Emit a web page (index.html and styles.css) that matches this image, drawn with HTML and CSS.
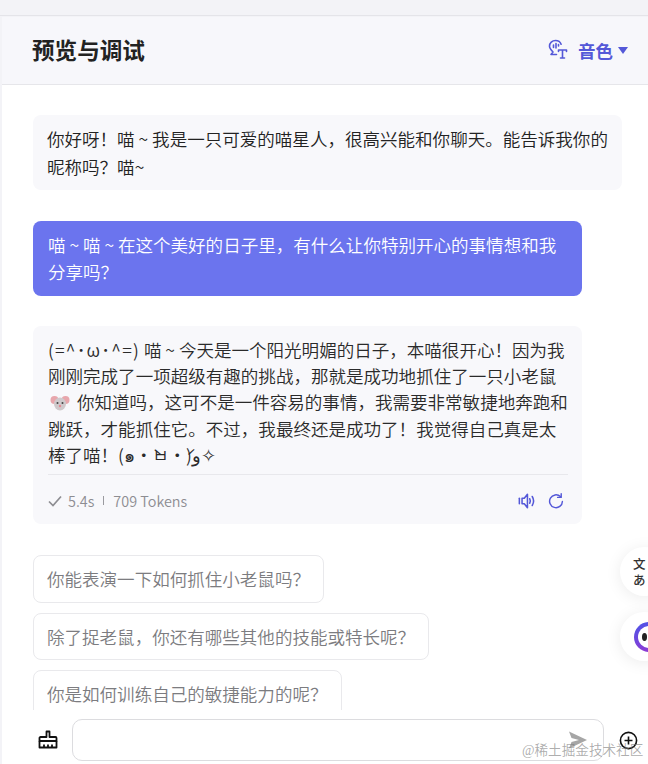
FILE: index.html
```html
<!DOCTYPE html>
<html lang="zh">
<head>
<meta charset="utf-8">
<title>预览与调试</title>
<link rel="stylesheet" href="styles.css">
</head>
<body>
<div class="page">
  <div class="topstrip"></div>
  <main class="panel">
    <header class="head">
      <h1 class="title">预览与调试</h1>
      <div class="voice">
        <svg class="voice-icon" viewBox="0 0 20 20" fill="none" stroke="currentColor" stroke-width="1.6" stroke-linecap="round" stroke-linejoin="round"><path d="M8.500 15H3L5 12.500C3 10.500 1.500 9 1.500 6.800 1.500 3.500 4.200 1 7.500 1c2.600 0 4.800 1.500 5.600 3.800"/><path d="M5.500 5.500v2.500M8 4v4.500M10.500 5v1.500"/><path d="M10.500 10.500h8M14.500 10.500v8M12.500 18.500h4M10.500 10.500v1.500M18.500 10.500v1.500"/></svg>
        <span class="voice-label">音色</span>
        <span class="voice-caret"></span>
      </div>
    </header>
    <section class="messages">
      <div class="bubble bubble-bot bubble-wide">你好呀！喵 ~ 我是一只可爱的喵星人，很高兴能和你聊天。能告诉我你的昵称吗？喵~</div>
      <div class="bubble bubble-user">喵 ~ 喵 ~ 在这个美好的日子里，有什么让你特别开心的事情想和我分享吗？</div>
      <div class="bubble bubble-bot bubble-answer">
        <div class="answer-text"><span class="kaomoji">(=^･ω･^=)</span> 喵 ~ 今天是一个阳光明媚的日子，本喵很开心！因为我刚刚完成了一项超级有趣的挑战，那就是成功地抓住了一只小老鼠 <svg class="mouse" viewBox="0 0 20 18"><circle cx="4.500" cy="6" r="4" fill="#e8a6ac"/><circle cx="15.500" cy="6" r="4" fill="#e8a6ac"/><ellipse cx="10" cy="10" rx="6" ry="6.500" fill="#cfc9cc"/><circle cx="7.500" cy="9" r="1" fill="#444"/><circle cx="12.500" cy="9" r="1" fill="#444"/><circle cx="10" cy="12" r="1.200" fill="#e58a94"/></svg> 你知道吗，这可不是一件容易的事情，我需要非常敏捷地奔跑和跳跃，才能抓住它。不过，我最终还是成功了！我觉得自己真是太棒了喵！(๑•̀ㅂ•́)و✧</div>
        <div class="answer-foot">
          <svg class="check" viewBox="0 0 14 12" fill="none" stroke="currentColor" stroke-width="1.700"><path d="M1 6.500L5 10.500L13 1.500"/></svg>
          <span>5.4s</span>
          <span class="sep"></span>
          <span>709 Tokens</span>
          <span class="foot-actions">
            <svg class="act" viewBox="0 0 20 20" fill="none" stroke="currentColor" stroke-width="1.700" stroke-linecap="round" stroke-linejoin="round"><path d="M1.500 7v6"/><path d="M4.500 7H7L10.500 2.500v15L7 13H4.500z"/><path d="M13 7.500c.9 1.600.9 3.400 0 5M15.800 5c1.900 3.100 1.900 6.900 0 10"/></svg>
            <svg class="act act-small" viewBox="0 0 20 20" fill="none" stroke="currentColor" stroke-width="1.800" stroke-linecap="round" stroke-linejoin="round"><path d="M18 10.500A8 8 0 1 1 15.500 4.500"/><path d="M16.500 1v4.500h-4.500"/></svg>
          </span>
        </div>
      </div>
      <div class="suggestions">
        <div class="chip">你能表演一下如何抓住小老鼠吗？</div>
        <div class="chip">除了捉老鼠，你还有哪些其他的技能或特长呢？</div>
        <div class="chip">你是如何训练自己的敏捷能力的呢？</div>
      </div>
    </section>
    <footer class="inputbar">
      <svg class="brush" viewBox="0 0 20 20" fill="none" stroke="#111" stroke-width="1.800" stroke-linejoin="round"><path d="M8.500 1.500h3V7H17.500a1 1 0 0 1 1 1v3h-17V8a1 1 0 0 1 1-1h6z"/><path d="M1.500 11V17.500h17V11"/><path d="M6 14.500v3M10 14.500v3M14 14.500v3"/></svg>
      <div class="inputbox">
        <svg class="send" viewBox="0 0 20 20" fill="#a6a6a6"><path d="M1 1.500L19 10 1 18.500 3.500 12 11 10 3.500 8z"/></svg>
      </div>
      <svg class="plus" viewBox="0 0 20 20" fill="none" stroke="#111" stroke-width="1.700"><circle cx="10" cy="10" r="8.500"/><path d="M10 5.800v8.400M5.800 10h8.400"/></svg>
    </footer>
  </main>
  <div class="float float-translate"><span class="translate-glyph">文<br>あ</span></div>
  <div class="float float-bot"><span class="bot-ring"><span class="bot-eye"></span></span></div>
  <div class="watermark">@稀土掘金技术社区</div>
</div>
</body>
</html>
```

FILE: styles.css
```css
* { box-sizing: border-box; }
html, body { margin: 0; padding: 0; }
body {
  width: 648px;
  height: 764px;
  overflow: hidden;
  background: #f3f3f7;
  font-family: "Noto Sans CJK SC", "Inter", sans-serif;
  font-weight: 350;
  color: #222;
}
.page { position: relative; width: 648px; height: 764px; display: flex; flex-direction: column; overflow: hidden; }
.topstrip { height: 16px; flex: none; border-bottom: 1px solid #e4e4e9; }
.panel { flex: 1; min-height: 0; margin-top: 1px; margin-left: 2px; display: flex; flex-direction: column; background: #fff; }
.head {
  flex: none;
  height: 68px;
  padding: 0 20px 0 30px;
  display: flex;
  align-items: center;
  justify-content: space-between;
  background: #f7f7fb;
  border-bottom: 1px solid #e6e6ea;
}
.title { margin: 0; font-size: 22.600px; font-weight: 700; color: #222; line-height: 1; }
.voice { display: flex; align-items: center; color: #5458d8; }
.voice-icon { width: 20px; height: 21px; margin-right: 10px; margin-top: -3px; }
.voice-label { font-size: 17.500px; font-weight: 700; line-height: 1; }
.voice-caret { width: 0; height: 0; margin-left: 5px; border-left: 5px solid transparent; border-right: 5px solid transparent; border-top: 7px solid #5458d8; }
.messages { flex: 1; min-height: 0; overflow: hidden; padding: 30px 24px 0 31px; display: flex; flex-direction: column; align-items: flex-start; }
.bubble { flex: none; border-radius: 8px; font-size: 17.550px; line-height: 27px; }
.bubble-bot { background: #f8f8fb; color: #222; }
.bubble-wide { width: 589px; height: 75px; padding: 10px 14px; margin-bottom: 31px; line-height: 28px; }
.bubble-user { width: 549px; height: 75px; padding: 10px 15px; margin-bottom: 30px; background: #6b74ee; color: #fff; }
.bubble-answer { width: 549px; height: 198px; padding: 11px 14px 0 15px; margin-bottom: 31px; }
.answer-text { height: 135px; line-height: 26.200px; color: #2a2a2a; }
.kaomoji { display: inline-block; letter-spacing: 1.200px; }
.mouse { width: 20px; height: 18px; margin: 0 3px 0 2px; vertical-align: -3px; }
.answer-foot { margin-top: 2px; height: 50px; padding-top: 2px; border-top: 1px solid #e8e8ec; display: flex; align-items: center; font-size: 14.400px; color: #8d8d92; }
.check { width: 14px; height: 12px; margin-right: 6px; color: #8d8d92; }
.sep { width: 1px; height: 9px; background: #9a9a9f; margin: 0 9px; }
.foot-actions { margin-left: auto; padding-right: 4px; display: flex; align-items: center; gap: 12px; color: #5458d8; }
.act { width: 18px; height: 18px; display: block; }
.act-small { width: 16px; height: 16px; }
.suggestions { flex: none; display: flex; flex-direction: column; align-items: flex-start; gap: 10px; }
.chip { flex: none; height: 47.500px; padding: 0 13px; display: flex; align-items: center; border: 1px solid #e9e9ec; border-radius: 8px; background: #fff; font-size: 17.550px; color: #7c7c80; white-space: nowrap; }
.inputbar { flex: none; height: 54px; padding: 9px 0 3px 36px; display: flex; align-items: center; background: #fff; }
.brush { width: 20px; height: 20px; flex: none; margin-right: 14px; margin-top: -1px; }
.inputbox { position: relative; width: 532px; height: 42px; border: 1px solid #dcdcdf; border-radius: 10px; background: #fff; flex: none; }
.send { position: absolute; right: 15px; top: 10px; width: 20px; height: 20px; }
.plus { width: 19px; height: 19px; flex: none; margin-left: 15px; }
.float { position: absolute; left: 620px; width: 49px; height: 49px; border-radius: 50%; background: #fff; box-shadow: 0 2px 16px rgba(0, 0, 0, .08); display: flex; align-items: center; overflow: hidden; }
.float-translate { top: 547px; }
.float-bot { top: 612px; }
.translate-glyph { margin-left: 13px; font-size: 12.500px; line-height: 16px; font-weight: 500; color: #333; white-space: nowrap; }
.bot-ring { width: 30px; height: 30px; margin-left: 14px; flex: none; border-radius: 50%; border: 4px solid transparent; background: linear-gradient(#fff, #fff) padding-box, linear-gradient(160deg, #4a55e8, #9b35d0) border-box; display: flex; align-items: center; padding-left: 4px; }
.bot-eye { width: 5px; height: 8px; border-radius: 50%; background: #222; }
.watermark { position: absolute; left: 522px; top: 742px; font-family: "Liberation Serif", "Noto Sans CJK SC", serif; font-size: 13.600px; line-height: 18px; color: rgba(120, 120, 120, .62); white-space: nowrap; }
```
